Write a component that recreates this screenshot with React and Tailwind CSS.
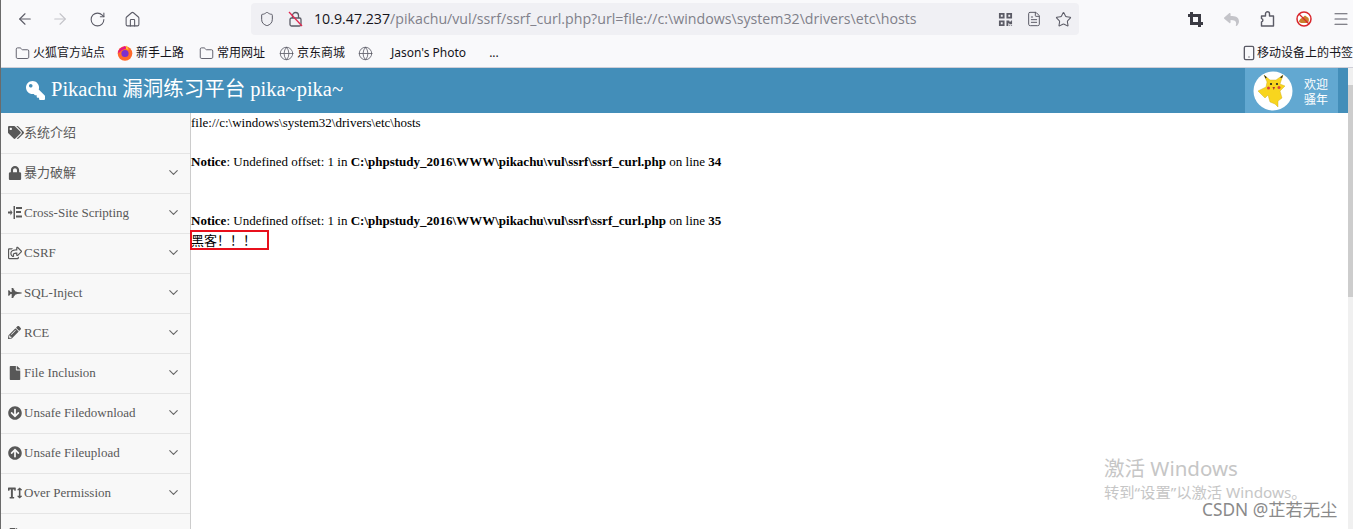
import { ArrowLeft, ArrowRight, RotateCw, Home, Shield, Star, ChevronDown, Menu, Globe, Folder, FileText, Smartphone } from 'lucide-react';
import { FaKey, FaTags, FaLock, FaRegShareSquare, FaFighterJet, FaPencilAlt, FaFile, FaArrowCircleDown, FaArrowCircleUp, FaTextHeight, FaQrcode, FaReply } from 'react-icons/fa';

const serif = '[font-family:"Liberation_Serif","Noto_Sans_CJK_SC",serif]';

function XssIcon() {
  return (
    <svg width="14" height="13" viewBox="0 0 14 13" fill="#585858">
      <path d="M0 5.500h2.500V3.500l2 3-2 3v-2H0zM5.500 0h1.500v13H5.500zM8 1h6v2H8zM8 5h5v2H8zM8 9.500h6v2H8z" />
    </svg>
  );
}

const menu = [
  { label: '系统介绍', icon: <FaTags size={17} />, arrow: false },
  { label: '暴力破解', icon: <FaLock size={14} />, arrow: true },
  { label: 'Cross-Site Scripting', icon: <XssIcon />, arrow: true },
  { label: 'CSRF', icon: <FaRegShareSquare size={14} />, arrow: true },
  { label: 'SQL-Inject', icon: <FaFighterJet size={14} />, arrow: true },
  { label: 'RCE', icon: <FaPencilAlt size={13} />, arrow: true },
  { label: 'File Inclusion', icon: <FaFile size={14} />, arrow: true },
  { label: 'Unsafe Filedownload', icon: <FaArrowCircleDown size={14} />, arrow: true },
  { label: 'Unsafe Fileupload', icon: <FaArrowCircleUp size={14} />, arrow: true },
  { label: 'Over Permission', icon: <FaTextHeight size={14} />, arrow: true },
];

function FirefoxIcon() {
  return (
    <svg width="16" height="16" viewBox="0 0 16 16">
      <circle cx="8" cy="8.500" r="7.300" fill="#ff6a2b" />
      <path d="M1 8.500a7 7 0 0 1 5-6.600L8 1l1.500 2.500L5 5z" fill="#e31587" />
      <circle cx="8" cy="8.500" r="3.600" fill="#7b2fd0" />
      <path d="M9 0.500c2 1.500 2.500 3 2.500 4.500L9 4z" fill="#ffbd2e" />
    </svg>
  );
}

function BlockedAddon() {
  return (
    <svg width="16" height="16" viewBox="0 0 16 16">
      <circle cx="8" cy="8" r="7" fill="#fff" stroke="#d9262c" strokeWidth="1.500" />
      <path d="M3 11c0-2 1.500-3.500 3-4l3-2.500 3.500 2.500c.8 2 .3 4-1 5H5z" fill="#c9802c" />
      <path d="M3 3l10 10" stroke="#d9262c" strokeWidth="1.300" />
    </svg>
  );
}

function Pikachu() {
  return (
    <svg width="40" height="40" viewBox="0 0 40 40">
      <circle cx="20" cy="20" r="19.500" fill="#fff" />
      <path d="M11 4L17 9H23L30 4L27 13L32 15L27 20L29 27L25 30L25 36L22 33L17 31L15 24L12 27L5 20L13 16L14 11Z" fill="#f8d51e" stroke="#c9a612" strokeWidth=".4" />
      <path d="M11 4l2.800 2.300-1.300 1.200zM30 4l-.9 3-2.100-.6z" fill="#222" />
      <circle cx="18" cy="13" r="1.100" fill="#222" />
      <circle cx="24" cy="13" r="1.100" fill="#222" />
      <circle cx="15.500" cy="17" r="1.500" fill="#d8423a" />
      <circle cx="26" cy="16.500" r="1.500" fill="#d8423a" />
      <path d="M19.500 16h2.500l-1.200 3z" fill="#a33" />
    </svg>
  );
}

function Bookmark({ icon, label, className }) {
  return (
    <div className={`flex items-center gap-[3px] ${className || ''}`}>
      {icon}
      {label && <span>{label}</span>}
    </div>
  );
}

function Notice({ line }) {
  return (
    <div className="whitespace-nowrap">
      <b>Notice</b>: Undefined offset: 1 in <b>C:\phpstudy_2016\WWW\pikachu\vul\ssrf\ssrf_curl.php</b> on line <b>{line}</b>
    </div>
  );
}

export default function App() {
  return (
    <div className="relative flex h-[529px] w-[1353px] flex-col overflow-hidden border-l border-[#6b6b6b] bg-white">
      {/* browser chrome */}
      <div className="flex h-[38px] shrink-0 items-center bg-[#f9f9fb] text-[#5b5b66]">
        <div className="flex items-center pl-[15px]">
          <ArrowLeft size={18} strokeWidth={1.500} />
          <ArrowRight size={18} strokeWidth={1.500} className="ml-[17px] text-[#c4c4c9]" />
          <RotateCw size={17} strokeWidth={1.500} className="ml-[20px]" />
          <Home size={17} strokeWidth={1.500} className="ml-[18px]" />
        </div>
        <div className="ml-[110px] flex h-[32px] w-[828px] items-center rounded-[4px] bg-[#f0f0f4] pl-[8px]">
          <Shield size={16} strokeWidth={1.500} />
          <svg width="15" height="16" viewBox="0 0 15 16" fill="none" stroke="#5b5b66" strokeWidth="1.300" className="ml-[13px]">
            <rect x="2" y="7" width="11" height="8" rx="1.500" />
            <path d="M4.500 7V4.500a3 3 0 0 1 6 0V7" />
            <path d="M1 1l13 14" stroke="#e22850" />
          </svg>
          <span className="ml-[11px] whitespace-nowrap font-['Open_Sans',sans-serif] text-[14.200px] text-[#15141a]">
            10.9.47.237<span className="text-[#80808a]">/pikachu/vul/ssrf/ssrf_curl.php?url=file://c:\windows\system32\drivers\etc\hosts</span>
          </span>
          <div className="ml-auto flex items-center gap-[13px] pr-[7px]">
            <FaQrcode size={15} />
            <FileText size={16} strokeWidth={1.500} />
            <Star size={17} strokeWidth={1.500} />
          </div>
        </div>
        <div className="ml-auto flex items-center pr-[3px]">
          <svg width="15" height="15" viewBox="0 0 15 15" fill="none" stroke="#3b3b44" strokeWidth="3">
            <path d="M3.500 0v11.500H15M0 3.500h11.500V15" />
          </svg>
          <FaReply size={15} className="ml-[21px] text-[#c4c4c9]" />
          <svg width="15" height="16" viewBox="0 0 15 16" fill="none" stroke="#5b5b66" strokeWidth="1.400" strokeLinejoin="round" className="ml-[21px]">
            <path d="M1.500 15V11a1.800 1.800 0 0 0 0-3.500V5h4V2.800a2 2 0 0 1 4 0V5h4v10z" />
          </svg>
          <div className="ml-[21px]"><BlockedAddon /></div>
          <Menu size={18} strokeWidth={1.500} className="ml-[20px]" />
        </div>
      </div>

      {/* bookmarks bar */}
      <div className="flex h-[30px] shrink-0 items-center whitespace-nowrap border-b border-[#cfcfd8] bg-[#f9f9fb] pl-[13px] pt-[1px] font-['Noto_Sans','Noto_Sans_CJK_SC',sans-serif] text-[12px] text-[#15141a]">
        <Bookmark icon={<Folder size={15} strokeWidth={1.500} className="text-[#5b5b66]" />} label="火狐官方站点" className="ml-[1px]" />
        <Bookmark icon={<FirefoxIcon />} label="新手上路" className="ml-[12px]" />
        <Bookmark icon={<Folder size={15} strokeWidth={1.500} className="text-[#5b5b66]" />} label="常用网址" className="ml-[15px]" />
        <Bookmark icon={<Globe size={15} strokeWidth={1.300} className="text-[#5b5b66]" />} label="京东商城" className="ml-[14px]" />
        <Bookmark icon={<Globe size={15} strokeWidth={1.300} className="text-[#5b5b66]" />} className="ml-[13px]" />
        <span className="ml-[18px]">Jason's Photo</span>
        <span className="ml-[23px]">...</span>
        <div className="ml-auto flex items-center">
          <Smartphone size={16} strokeWidth={2} className="text-[#5b5b66]" />
          <span>移动设备上的书签</span>
        </div>
      </div>

      <div className="flex min-h-0 flex-1">
        <div className="flex min-w-0 flex-1 flex-col">
          {/* app header */}
          <div className={`flex h-[45px] shrink-0 items-center bg-[#438eb9] text-white ${serif}`}>
            <FaKey size={19} className="ml-[25px] -scale-x-100" />
            <span className="ml-[6px] pb-[2px] text-[20.500px]">Pikachu 漏洞练习平台 pika~pika~</span>
            <div className="ml-auto mr-[10px] flex h-full w-[93px] items-center bg-[#62a8d1] pl-[8px]">
              <Pikachu />
              <div className="ml-[11px] font-['Noto_Sans_CJK_SC',sans-serif] text-[12px] leading-[15px]">
                <div>欢迎</div>
                <div>骚年</div>
              </div>
            </div>
          </div>

          <div className="flex min-h-0 flex-1">
            {/* sidebar */}
            <div className={`w-[190px] shrink-0 border-r border-[#ccc] bg-[#f8f8f8] pt-[1px] text-[#585858] ${serif}`}>
              {menu.map(item => (
                <div key={item.label} className="flex h-[40px] items-center border-b border-[#e5e5e5] pb-[2px] pl-[7px] pr-[9px] text-[13px]">
                  <span className="flex w-[16px] shrink-0 items-center">{item.icon}</span>
                  <span className="whitespace-nowrap">{item.label}</span>
                  {item.arrow && <ChevronDown size={15} strokeWidth={1.800} className="ml-auto text-[#666]" />}
                </div>
              ))}
              <div className="flex h-[40px] items-center pl-[7px]">
                <FaFile size={13} />
              </div>
            </div>

            {/* page content */}
            <div className={`flex-1 pt-[2px] text-[13px] leading-[15px] text-black ${serif}`}>
              <div className="h-[39px] whitespace-nowrap">file://c:\windows\system32\drivers\etc\hosts</div>
              <div className="h-[59px]"><Notice line="34" /></div>
              <div className="h-[17px]"><Notice line="35" /></div>
              <div className="-ml-[1px] box-border flex h-[20px] w-[79px] items-center border-2 border-[#e8101c] text-[13px]">
                <span className="-ml-[1px] whitespace-nowrap">黑客！！！</span>
              </div>
            </div>
          </div>
        </div>

        {/* scrollbar */}
        <div className="w-[5px] shrink-0 bg-[#f0f0f0] pt-[17px]">
          <div className="h-[212px] w-full bg-[#cdcdcd]" />
        </div>
      </div>

      {/* windows watermark */}
      <div className="pointer-events-none absolute left-[1103px] top-[455px] whitespace-nowrap font-['Noto_Sans','Noto_Sans_CJK_SC',sans-serif] text-[#c6c6c6]">
        <div className="text-[20.500px] leading-[26px]">激活 Windows</div>
        <div className="mt-[2px] text-[15.300px] leading-[18px]">转到“设置”以激活 Windows。</div>
      </div>
      <div className="pointer-events-none absolute left-[1201px] top-[501px] whitespace-nowrap font-['Noto_Sans','Noto_Sans_CJK_SC',sans-serif] text-[17.300px] leading-[18px] text-[#8a8a8a]">
        CSDN @芷若无尘
      </div>
    </div>
  );
}
